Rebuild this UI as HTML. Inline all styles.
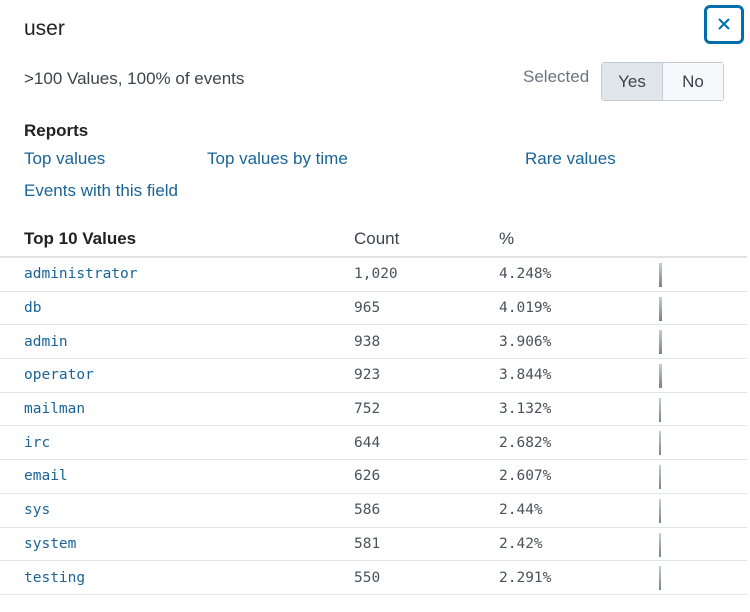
<!DOCTYPE html>
<html><head><style>
body{margin:0;width:750px;height:612px;background:#fff;font-family:"Liberation Sans",sans-serif;color:#3c444d;position:relative;overflow:hidden}
.a{position:absolute;white-space:nowrap}
.link{color:#1a6496;font-size:17px}
.close{position:absolute;left:704px;top:5px;width:40px;height:39px;border:3px solid #006eaa;border-radius:6px;box-sizing:border-box}
.tog{position:absolute;left:601px;top:62px;width:123px;height:39px;border:1px solid #c3cbd4;border-radius:3px;box-sizing:border-box;display:flex;font-size:17px}
.tog div{flex:1;display:flex;align-items:center;justify-content:center}
table{position:absolute;left:0;top:222px;width:747px;border-collapse:collapse}
th{font-weight:normal;text-align:left;height:34px;font-size:17px;border-bottom:2px solid #dfe3e7;padding:0}
td{height:32.7px;border-bottom:1px solid #e1e4e8;padding:0;font-family:"DejaVu Sans Mono","Liberation Mono",monospace;font-size:14.5px;color:#4a525b;position:relative}
td.v{color:#1a6496;padding-left:24px;width:330px}
.bar{position:absolute;left:160px;top:5px;height:24px;background:linear-gradient(#c8ccd2,#7a818c)}
</style></head><body>
<div class="a" style="left:24px;top:17px;font-size:21px;color:#222">user</div>
<div class="close"><svg width="34" height="33" style="position:absolute;left:0;top:0"><path d="M12 11L22 21M22 11L12 21" stroke="#006eaa" stroke-width="2"/></svg></div>
<div class="a" style="left:24px;top:69px;font-size:17px">&gt;100 Values, 100% of events</div>
<div class="a" style="left:523px;top:67px;font-size:17px;color:#6b7480">Selected</div>
<div class="tog"><div style="background:#e1e6eb;border-right:1px solid #c3cbd4">Yes</div><div style="background:#f7f8fa">No</div></div>
<div class="a" style="left:24px;top:121px;font-size:17px;font-weight:bold;color:#222">Reports</div>
<div class="a link" style="left:24px;top:149px">Top values</div>
<div class="a link" style="left:207px;top:149px">Top values by time</div>
<div class="a link" style="left:525px;top:149px">Rare values</div>
<div class="a link" style="left:24px;top:181px">Events with this field</div>
<table>
<tr><th style="padding-left:24px;font-weight:bold;color:#222">Top 10 Values</th><th style="width:145px">Count</th><th>%</th></tr>
<tr><td class="v">administrator</td><td>1,020</td><td>4.248%<div class="bar" style="width:3px"></div></td></tr>
<tr><td class="v">db</td><td>965</td><td>4.019%<div class="bar" style="width:3px"></div></td></tr>
<tr><td class="v">admin</td><td>938</td><td>3.906%<div class="bar" style="width:3px"></div></td></tr>
<tr><td class="v">operator</td><td>923</td><td>3.844%<div class="bar" style="width:3px"></div></td></tr>
<tr><td class="v">mailman</td><td>752</td><td>3.132%<div class="bar" style="width:2px"></div></td></tr>
<tr><td class="v">irc</td><td>644</td><td>2.682%<div class="bar" style="width:2px"></div></td></tr>
<tr><td class="v">email</td><td>626</td><td>2.607%<div class="bar" style="width:2px"></div></td></tr>
<tr><td class="v">sys</td><td>586</td><td>2.44%<div class="bar" style="width:2px"></div></td></tr>
<tr><td class="v">system</td><td>581</td><td>2.42%<div class="bar" style="width:2px"></div></td></tr>
<tr><td class="v">testing</td><td>550</td><td>2.291%<div class="bar" style="width:2px"></div></td></tr>
</table>
</body></html>
